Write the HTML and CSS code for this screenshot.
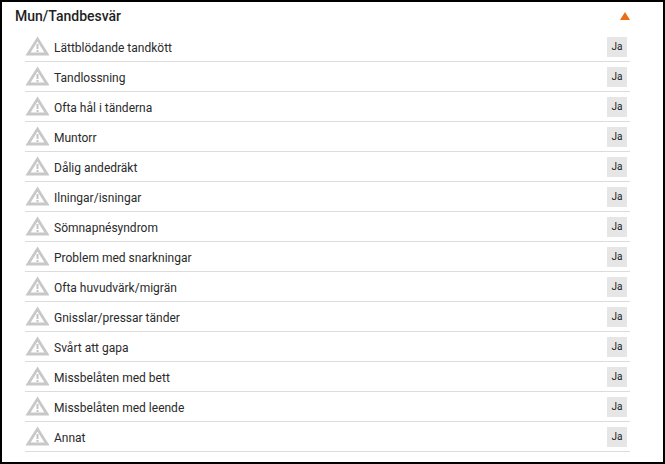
FILE: index.html
```html
<!DOCTYPE html>
<html lang="sv">
<head>
<meta charset="utf-8">
<title>Mun/Tandbesvär</title>
<link rel="stylesheet" href="styles.css">
</head>
<body>
<svg class="defs" width="0" height="0" aria-hidden="true"><defs>
<symbol id="warn" viewBox="0 0 24 20"><path d="M12.5 3 L22 18 H3 Z" fill="none" stroke="#c8c8c8" stroke-width="2.8" stroke-linejoin="miter"/><rect x="11.5" y="8" width="2" height="5" fill="#c4c4c4"/><rect x="11.5" y="14" width="2" height="2" fill="#c4c4c4"/></symbol>
</defs></svg>
<main class="panel">
<header class="head"><h1 class="title">Mun/Tandbesvär</h1><span class="caret"></span></header>
<ul class="list">
<li class="row"><svg class="icon"><use href="#warn"/></svg><span class="label">Lättblödande tandkött</span><button class="ja">Ja</button></li>
<li class="row"><svg class="icon"><use href="#warn"/></svg><span class="label">Tandlossning</span><button class="ja">Ja</button></li>
<li class="row"><svg class="icon"><use href="#warn"/></svg><span class="label">Ofta hål i tänderna</span><button class="ja">Ja</button></li>
<li class="row"><svg class="icon"><use href="#warn"/></svg><span class="label">Muntorr</span><button class="ja">Ja</button></li>
<li class="row"><svg class="icon"><use href="#warn"/></svg><span class="label">Dålig andedräkt</span><button class="ja">Ja</button></li>
<li class="row"><svg class="icon"><use href="#warn"/></svg><span class="label">Ilningar/isningar</span><button class="ja">Ja</button></li>
<li class="row"><svg class="icon"><use href="#warn"/></svg><span class="label">Sömnapnésyndrom</span><button class="ja">Ja</button></li>
<li class="row"><svg class="icon"><use href="#warn"/></svg><span class="label">Problem med snarkningar</span><button class="ja">Ja</button></li>
<li class="row"><svg class="icon"><use href="#warn"/></svg><span class="label">Ofta huvudvärk/migrän</span><button class="ja">Ja</button></li>
<li class="row"><svg class="icon"><use href="#warn"/></svg><span class="label">Gnisslar/pressar tänder</span><button class="ja">Ja</button></li>
<li class="row"><svg class="icon"><use href="#warn"/></svg><span class="label">Svårt att gapa</span><button class="ja">Ja</button></li>
<li class="row"><svg class="icon"><use href="#warn"/></svg><span class="label">Missbelåten med bett</span><button class="ja">Ja</button></li>
<li class="row"><svg class="icon"><use href="#warn"/></svg><span class="label">Missbelåten med leende</span><button class="ja">Ja</button></li>
<li class="row"><svg class="icon"><use href="#warn"/></svg><span class="label">Annat</span><button class="ja">Ja</button></li>
</ul>
</main>
</body>
</html>
```
FILE: styles.css
```css
* { box-sizing: border-box; }
html, body { margin: 0; padding: 0; }
body { width: 665px; height: 464px; background: #fff; font-family: Roboto, "Open Sans", sans-serif; overflow: hidden; }
.defs { position: absolute; }
.panel { width: 665px; height: 464px; border: 2px solid #000; padding: 0 33px 0 23px; }
.head { height: 30px; display: flex; align-items: center; justify-content: space-between; margin-left: -10px; padding-bottom: 3px; }
.title { margin: 0; font-size: 14px; font-weight: 500; color: #1f1f1f; }
.caret { width: 0; height: 0; border-left: 5.5px solid transparent; border-right: 5.5px solid transparent; border-bottom: 8px solid #ed6c12; }
.list { list-style: none; margin: 0; padding: 0; }
.row { height: 30px; display: flex; align-items: center; border-bottom: 1px solid #dcdcdc; }
.icon { width: 24px; height: 20px; margin-right: 5px; margin-top: -1px; flex: none; }
.label { flex: 1; font-size: 12px; color: #2a2a2a; padding-top: 2px; }
.ja { width: 20px; height: 20px; margin-right: 3px; padding: 0; border: 0; background: #e6e6e6; font: 10px Roboto, sans-serif; color: #222; }
```
